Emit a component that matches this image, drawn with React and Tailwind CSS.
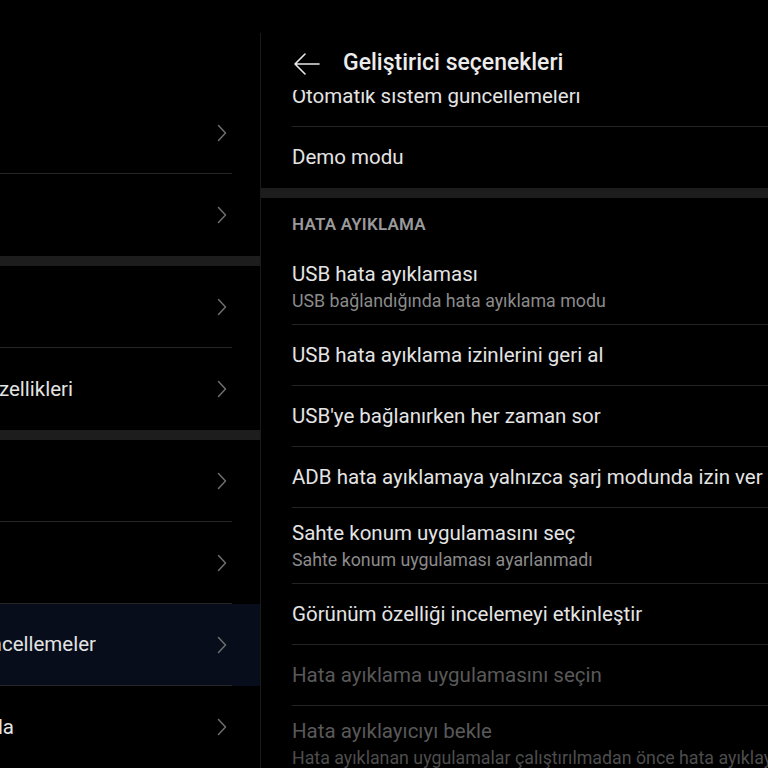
import React from 'react';

const leftRows = [
  { label: '', divider: true },
  { label: '', divider: false, gapAfter: true },
  { label: '', divider: true },
  { label: 'Erişilebilirlik özellikleri', end: 73, divider: false, gapAfter: true },
  { label: '', divider: true },
  { label: '', divider: true },
  { label: 'Sistem ve güncellemeler', end: 96, divider: true, active: true },
  { label: 'Telefon hakkında', end: 14, divider: false },
];

function Chevron() {
  return (
    <svg width="10" height="18" viewBox="0 0 10 18" fill="none" className="shrink-0">
      <path d="M1.5 1.5L8.5 9L1.5 16.5" stroke="#6e6e6e" strokeWidth="1.5" strokeLinecap="round" strokeLinejoin="round" />
    </svg>
  );
}

function LeftRow({ row }) {
  return (
    <div className={`h-[82px] w-full shrink-0 ${row.active ? 'bg-[#070d1b]' : ''}`}>
      <div className={`flex h-full w-[232px] items-center pr-[5px] ${row.divider ? 'border-b border-[#262626]' : ''}`}>
        {row.label ? (
          <div className="flex justify-end overflow-hidden" style={{ width: row.end }}>
            <span className="whitespace-nowrap text-[20.5px] text-[#e3e3e3]">{row.label}</span>
          </div>
        ) : null}
        <div className="ml-auto">
          <Chevron />
        </div>
      </div>
    </div>
  );
}

function Item({ title, sub, disabled, divider = true, single = true }) {
  return (
    <div className={`shrink-0 pl-[31px] ${single ? 'h-[61px]' : 'h-[76px]'}`}>
      <div className={`flex h-full flex-col justify-center overflow-hidden ${divider ? 'border-b border-[#242424]' : ''}`}>
        <div className={`whitespace-nowrap text-[20.5px] leading-[25px] ${disabled ? 'text-[#595959]' : 'text-[#e4e4e4]'}`}>{title}</div>
        {sub ? (
          <div className={`mt-[3px] whitespace-nowrap text-[17.8px] leading-[22px] ${disabled ? 'text-[#4d4d4d]' : 'text-[#8b8b8b]'}`}>{sub}</div>
        ) : null}
      </div>
    </div>
  );
}

export default function App() {
  return (
    <div className="flex h-[768px] w-[768px] overflow-hidden bg-black font-['Roboto',sans-serif]">
      {/* settings list, scrolled off to the left */}
      <div className="flex w-[260px] shrink-0 flex-col pt-[92px]">
        {leftRows.map((row, i) => (
          <React.Fragment key={i}>
            <LeftRow row={row} />
            {row.gapAfter && <div className="h-[10px] shrink-0 bg-[#1d1d1d]" />}
          </React.Fragment>
        ))}
      </div>

      <div className="mt-[33px] w-px shrink-0 bg-[#1a1a1a]" />

      {/* developer options */}
      <div className="flex min-w-0 flex-1 flex-col pt-[33px]">
        <div className="flex h-[57px] shrink-0 items-center gap-[22px] pl-[32px] pt-[4px]">
          <svg width="28" height="28" viewBox="0 0 28 28" fill="none">
            <path d="M26 14H2M12 4L2 14L12 24" stroke="#e8e8e8" strokeWidth="1.6" strokeLinecap="round" strokeLinejoin="round" />
          </svg>
          <h1 className="text-[23px] font-medium text-[#ececec]">Geliştirici seçenekleri</h1>
        </div>

        <div className="flex-1 overflow-hidden">
          <div className="-mt-[24px] flex flex-col">
            <Item title="Otomatik sistem güncellemeleri" />
            <Item title="Demo modu" divider={false} />
            <div className="h-[10px] shrink-0 bg-[#1d1d1d]" />
            <div className="flex h-[51px] shrink-0 items-center pl-[31px] pt-[2px]">
              <span className="text-[17px] font-semibold tracking-[0.2px] text-[#9a9a9a]">HATA AYIKLAMA</span>
            </div>
            <Item title="USB hata ayıklaması" sub="USB bağlandığında hata ayıklama modu" single={false} />
            <Item title="USB hata ayıklama izinlerini geri al" />
            <Item title="USB'ye bağlanırken her zaman sor" />
            <Item title="ADB hata ayıklamaya yalnızca şarj modunda izin ver" />
            <Item title="Sahte konum uygulamasını seç" sub="Sahte konum uygulaması ayarlanmadı" single={false} />
            <Item title="Görünüm özelliği incelemeyi etkinleştir" />
            <Item title="Hata ayıklama uygulamasını seçin" disabled />
            <Item
              title="Hata ayıklayıcıyı bekle"
              sub="Hata ayıklanan uygulamalar çalıştırılmadan önce hata ayıklayıcının bağlanmasını bekler"
              single={false}
              disabled
            />
          </div>
        </div>
      </div>
    </div>
  );
}
